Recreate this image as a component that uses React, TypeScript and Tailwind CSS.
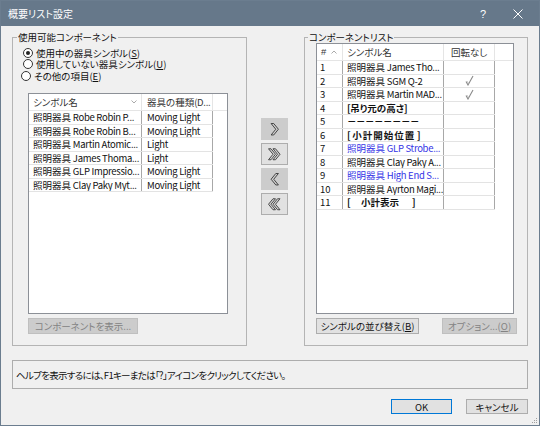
import React from "react";

const FONT = "font-['Noto_Sans_CJK_JP','Noto_Sans_CJK_SC',sans-serif] [font-feature-settings:'palt']";

function t(s: string): React.ReactNode {
  const parts = s.split(/([\x20-\x7E]+)/);
  return parts.map((p, i) =>
    /^[\x20-\x7E]+$/.test(p) ? (
      <span key={i} className="tracking-[-0.3px]">{p}</span>
    ) : (
      <React.Fragment key={i}>{p}</React.Fragment>
    )
  );
}

function Radio({ checked, label, className = "" }: { checked?: boolean; label: React.ReactNode; className?: string }) {
  return (
    <div className={"flex items-center h-[11.5px] gap-[3px] " + className}>
      <div className="w-[10px] h-[10px] rounded-full border border-[#333] bg-white flex items-center justify-center shrink-0">
        {checked && <div className="w-[4px] h-[4px] rounded-full bg-[#222]" />}
      </div>
      <span className="leading-[10px] whitespace-nowrap">{label}</span>
    </div>
  );
}

function Chevron({ dir, double }: { dir: "r" | "l"; double?: boolean }) {
  const single = (ox: number) =>
    dir === "r"
      ? `M${ox} 0.5 L${ox + 2.5} 0.5 L${ox + 7} 6 L${ox + 2.5} 11.5 L${ox} 11.5 L${ox + 4.5} 6 Z`
      : `M${ox + 7} 0.5 L${ox + 4.5} 0.5 L${ox} 6 L${ox + 4.5} 11.5 L${ox + 7} 11.5 L${ox + 2.5} 6 Z`;
  return (
    <svg width={double ? 13 : 9} height="13" viewBox={double ? "-0.5 0 13 12.5" : "-0.5 0 8.5 12.5"}>
      {double && <path d={single(dir === "r" ? 0 : 4.5)} fill="#cfcfcf" stroke="#3a3a3a" strokeWidth="0.9" />}
      <path d={single(double ? (dir === "r" ? 4.5 : 0) : 0.5)} fill="#cfcfcf" stroke="#3a3a3a" strokeWidth="0.9" />
    </svg>
  );
}

function Check() {
  return (
    <svg width="9" height="11" viewBox="0 0 9 11">
      <path d="M1 6.5 L3 10 L8 1" fill="none" stroke="#8a8a8a" strokeWidth="1.1" />
      <path d="M2.2 6.2 L3.4 8.4" fill="none" stroke="#b5b5b5" strokeWidth="0.8" />
    </svg>
  );
}

const leftRows = [
  ["照明器具 Robe Robin P...", "Moving Light"],
  ["照明器具 Robe Robin B...", "Moving Light"],
  ["照明器具 Martin Atomic...", "Light"],
  ["照明器具 James Thoma...", "Light"],
  ["照明器具 GLP Impressio...", "Moving Light"],
  ["照明器具 Clay Paky Myt...", "Moving Light"],
];

type RRow = { n: string; name: string; check?: boolean; cls?: string };
const rightRows: RRow[] = [
  { n: "1", name: "照明器具 James Tho..." },
  { n: "2", name: "照明器具 SGM Q-2", check: true },
  { n: "3", name: "照明器具 Martin MAD...", check: true },
  { n: "4", name: "[吊り元の高さ]", cls: "font-bold" },
  { n: "5", name: "－－－－－－－－", cls: "font-bold tracking-[-0.5px]" },
  { n: "6", name: "[ 小計開始位置 ]", cls: "font-bold tracking-[1px]" },
  { n: "7", name: "照明器具 GLP Strobe...", cls: "text-[#3434e6]" },
  { n: "8", name: "照明器具 Clay Paky A..." },
  { n: "9", name: "照明器具 High End S...", cls: "text-[#3434e6]" },
  { n: "10", name: "照明器具 Ayrton Magi..." },
  { n: "11", name: "[\u00a0\u00a0\u00a0\u00a0\u00a0小計表示\u00a0\u00a0\u00a0\u00a0\u00a0\u00a0]", cls: "font-bold" },
];

export default function App() {
  return (
    <div className={"w-[540px] h-[426px] bg-[#f0f0f0] border border-[#6b7d8f] flex flex-col text-[9.5px] text-[#111] relative overflow-hidden " + FONT}>
      {/* Title bar */}
      <div className="h-[25px] bg-[#66788a] flex items-center shrink-0 text-white">
        <span className="ml-[7px] text-[10px] leading-[12px]">概要リスト設定</span>
        <span className="ml-auto text-[11px] leading-[12px] font-['Liberation_Sans',sans-serif]">?</span>
        <svg className="ml-[27px] mr-[16px]" width="10" height="10" viewBox="0 0 10 10">
          <path d="M0.5 0.5 L9.5 9.5 M9.5 0.5 L0.5 9.5" stroke="#ffffff" strokeWidth="1" />
        </svg>
      </div>

      {/* Body */}
      <div className="pl-[11px] pt-[11px] flex flex-col">
        <div className="flex h-[309px]">
          {/* Left group */}
          <div className="relative w-[235px] h-[309px] border border-[#b4b4b4] flex flex-col">
            <span className="absolute left-[4px] -top-[7px] px-[1px] bg-[#f0f0f0] leading-[12px] whitespace-nowrap">使用可能コンポーネント</span>
            <div className="mt-[9px] ml-[10px] flex flex-col">
              <Radio checked label={<>使用中の器具シンボル(<u>S</u>)</>} />
              <Radio label={<>使用していない器具シンボル(<u>U</u>)</>} />
              <Radio label={<>その他の項目(<u>E</u>)</>} className="-ml-[2px]" />
            </div>
            <div className="mt-[11.5px] ml-[15px] w-[200px] h-[221px] border border-[#8c9097] bg-white flex flex-col">
              <div className="h-[17px] flex border-b border-[#e5e5e5] text-[#333]">
                <div className="w-[113px] border-r border-[#e5e5e5] flex items-center pl-[4px] pr-[4px]">
                  <span className="leading-[12px]">シンボル名</span>
                  <svg className="ml-auto" width="6" height="4" viewBox="0 0 6 4">
                    <path d="M0.5 0.5 L3 3 L5.5 0.5" fill="none" stroke="#a0a0a0" strokeWidth="0.9" />
                  </svg>
                </div>
                <div className="w-[71px] border-r border-[#e5e5e5] flex items-center pl-[5px] overflow-hidden whitespace-nowrap">
                  <span className="leading-[12px]">{t("器具の種類(D...")}</span>
                </div>
              </div>
              {leftRows.map((r, i) => (
                <div key={i} className="w-[184px] h-[13.5px] flex border-b border-[#e3e3e3]">
                  <div className="w-[113px] border-r border-[#a8a8a8] flex items-center pl-[4px] overflow-hidden whitespace-nowrap">
                    <span className="leading-[12px]">{t(r[0])}</span>
                  </div>
                  <div className="w-[71px] border-r border-[#a8a8a8] flex items-center pl-[5px] overflow-hidden whitespace-nowrap">
                    <span className="leading-[12px]">{t(r[1])}</span>
                  </div>
                </div>
              ))}
            </div>
            <div className="mt-[4px] ml-[15px] w-[110px] h-[16px] bg-[#cccccc] border border-[#bfbfbf] text-[#838383] flex items-center justify-center">
              <span className="leading-[12px]">コンポーネントを表示...</span>
            </div>
          </div>

          {/* Middle buttons */}
          <div className="w-[57px] pt-[81px] pl-[14px] flex flex-col gap-[3px]">
            <div className="w-[27px] h-[22px] bg-[#cccccc] flex items-center justify-center">
              <Chevron dir="r" />
            </div>
            <div className="w-[27px] h-[22px] bg-[#e1e1e1] border border-[#adadad] flex items-center justify-center">
              <Chevron dir="r" double />
            </div>
            <div className="w-[27px] h-[22px] bg-[#cccccc] flex items-center justify-center">
              <Chevron dir="l" />
            </div>
            <div className="w-[27px] h-[22px] bg-[#e1e1e1] border border-[#adadad] flex items-center justify-center">
              <Chevron dir="l" double />
            </div>
          </div>

          {/* Right group */}
          <div className="relative w-[224px] h-[309px] border border-[#b4b4b4] flex flex-col">
            <span className="absolute left-[3px] -top-[7px] px-[1px] bg-[#f0f0f0] leading-[12px] whitespace-nowrap">コンポーネントリスト</span>
            <div className="mt-[5px] ml-[11px] w-[198px] h-[271px] border border-[#8c9097] bg-white flex flex-col">
              <div className="h-[17px] flex border-b border-[#e5e5e5] text-[#333] shrink-0">
                <div className="w-[26px] border-r border-[#e5e5e5] flex items-center pl-[4px]">
                  <span className="leading-[12px] font-['Liberation_Sans',sans-serif]">#</span>
                  <svg className="ml-[5px]" width="6" height="4" viewBox="0 0 6 4">
                    <path d="M0.5 3.5 L3 1 L5.5 3.5" fill="none" stroke="#a0a0a0" strokeWidth="0.9" />
                  </svg>
                </div>
                <div className="w-[101px] border-r border-[#e5e5e5] flex items-center pl-[4px]">
                  <span className="leading-[12px]">シンボル名</span>
                </div>
                <div className="w-[51px] border-r border-[#e5e5e5] flex items-center pl-[7px]">
                  <span className="leading-[12px]">回転なし</span>
                </div>
              </div>
              {rightRows.map((r, i) => (
                <div key={i} className="w-[178px] h-[13.5px] flex border-b border-[#e3e3e3] shrink-0">
                  <div className="w-[26px] border-r border-[#a8a8a8] flex items-center pl-[3px]">
                    <span className="leading-[12px]">{r.n}</span>
                  </div>
                  <div className={"w-[101px] border-r border-[#a8a8a8] flex items-center pl-[4px] overflow-hidden whitespace-nowrap " + (r.cls ?? "")}>
                    <span className="leading-[12px]">{t(r.name)}</span>
                  </div>
                  <div className="w-[51px] border-r border-[#a8a8a8] flex items-center justify-center">
                    {r.check && <Check />}
                  </div>
                </div>
              ))}
            </div>
            <div className="mt-[4px] ml-[11px] flex gap-[23px]">
              <div className="w-[103px] h-[16px] bg-[#e1e1e1] border border-[#adadad] flex items-center justify-center">
                <span className="leading-[12px]">シンボルの並び替え(<u>B</u>)</span>
              </div>
              <div className="w-[75px] h-[16px] bg-[#cccccc] border border-[#bfbfbf] text-[#838383] flex items-center justify-center">
                <span className="leading-[12px]">オプション...(<u>O</u>)</span>
              </div>
            </div>
          </div>
        </div>

        {/* Help box */}
        <div className="mt-[14px] w-[516px] h-[29px] border border-[#adadad] flex items-center pl-[3px]">
          <span className="leading-[12px] tracking-[-0.7px]">ヘルプを表示するには、F1キーまたは「?」アイコンをクリックしてください。</span>
        </div>

        {/* Dialog buttons */}
        <div className="mt-[10px] w-[516px] flex justify-end gap-[14px]">
          <div className="w-[61px] h-[15px] bg-[#e1e1e1] border border-[#0078d7] flex items-center justify-center">
            <span className="leading-[12px]">OK</span>
          </div>
          <div className="w-[62px] h-[15px] bg-[#e1e1e1] border border-[#adadad] flex items-center justify-center">
            <span className="leading-[12px]">キャンセル</span>
          </div>
        </div>
      </div>

      <svg className="absolute right-[1px] bottom-[1px]" width="6" height="6" viewBox="0 0 6 6">
        <rect x="4" y="0" width="1" height="1" fill="#a0a0a0" />
        <rect x="2" y="2" width="1" height="1" fill="#a0a0a0" />
        <rect x="4" y="2" width="1" height="1" fill="#a0a0a0" />
        <rect x="0" y="4" width="1" height="1" fill="#a0a0a0" />
        <rect x="2" y="4" width="1" height="1" fill="#a0a0a0" />
        <rect x="4" y="4" width="1" height="1" fill="#a0a0a0" />
      </svg>
    </div>
  );
}
